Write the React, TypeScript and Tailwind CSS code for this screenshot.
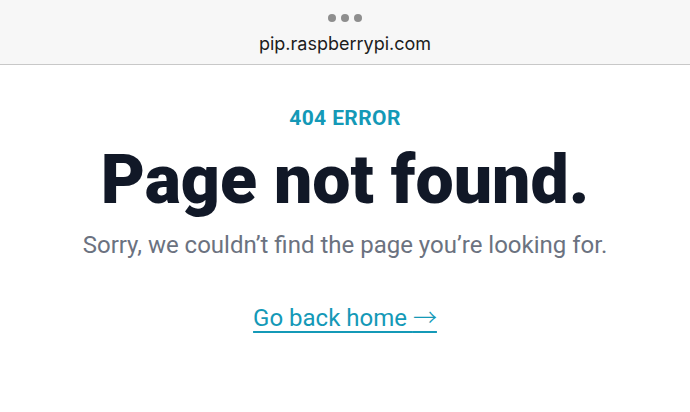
export default function App() {
  return (
    <div className="w-[690px] h-[412px] bg-white overflow-hidden" style={{ fontFamily: 'Roboto, "Liberation Sans", sans-serif' }}>
      <div className="h-[65px] bg-[#f7f7f7] border-b border-[#c8c8c8] flex flex-col items-center">
        <div className="flex gap-[5px] mt-[14px]">
          <span className="w-[8px] h-[8px] rounded-full bg-[#8e8e8e]" />
          <span className="w-[8px] h-[8px] rounded-full bg-[#8e8e8e]" />
          <span className="w-[8px] h-[8px] rounded-full bg-[#8e8e8e]" />
        </div>
        <div className="mt-[11px] text-[18px] leading-[22px] text-[#1c1c1c]" style={{ fontFamily: 'Inter, "Liberation Sans", sans-serif' }}>
          pip.raspberrypi.com
        </div>
      </div>
      <div className="flex flex-col items-center">
        <div className="mt-[41px] text-[21px] leading-[24px] font-bold tracking-[0.4px] text-[#1499b7]">404 ERROR</div>
        <h1 className="mt-[12px] text-[68px] leading-[76px] font-black text-[#111827]">Page not found.</h1>
        <p className="mt-[12px] text-[24px] leading-[30px] text-[#6b7280]">Sorry, we couldn’t find the page you’re looking for.</p>
        <a href="#" className="mt-[41px] text-[24px] leading-[30px] text-[#1499b7] underline underline-offset-[5px] decoration-[1.5px]">
          Go back home <span className="font-light" style={{ fontFamily: '"Noto Sans CJK JP", sans-serif' }}>→</span>
        </a>
      </div>
    </div>
  );
}
